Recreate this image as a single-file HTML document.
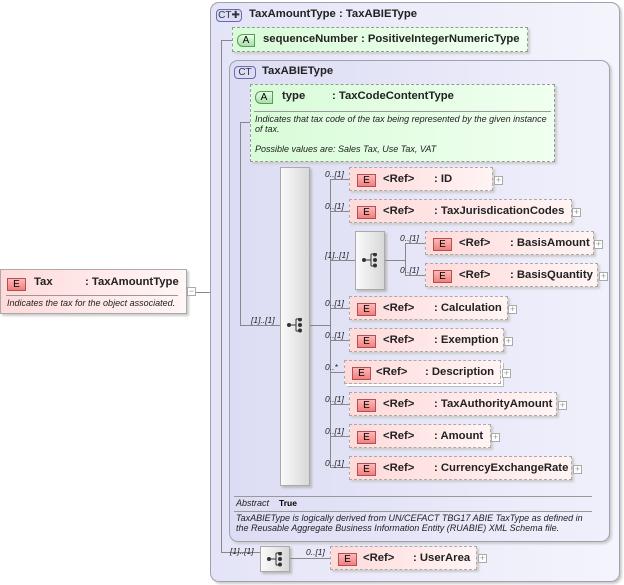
<!DOCTYPE html><html><head><style>
body{margin:0;width:624px;height:585px;position:relative;background:#fff;font-family:"Liberation Sans",sans-serif;overflow:hidden}
div{position:absolute;box-sizing:border-box}
.ct{border:1px solid #a0a0b0;border-radius:9px;background:linear-gradient(90deg,#e4e4f8,#f4f4fc);box-shadow:2px 2px 2px #ccc}
.b{font-size:11.3px;font-weight:bold;color:#222;white-space:nowrap}
.badge{border:1px solid #6a6ab0;border-radius:4px;background:#dcdcf4;font-size:10px;text-align:center;line-height:11px;color:#334}
.attr{border:1px dashed #999;background:linear-gradient(90deg,#d8fcd8,#f0fff0);box-shadow:2px 2px 2px #ccc}
.ab{border:1px solid #5a9a5a;border-radius:6px 0 0 6px;background:linear-gradient(#e8ffe8,#a8e0a8);font-size:10px;text-align:center;line-height:11px;width:18px;height:13px}
.el{border:1px dashed #aaa;background:linear-gradient(90deg,#ffdada,#fff4f4);box-shadow:2px 2px 2px #ccc;height:24px}
.eb{left:7px;top:6px;width:19px;height:13px;border:1px solid #b05050;background:linear-gradient(#ffb8b8,#f08080);font-size:10px;text-align:center;line-height:11px}
.pl{width:9px;height:9px;border:1px solid #aaa;background:#fff;font-size:9px;line-height:7px;text-align:center;color:#999}
.h{height:1px;background:#888}.v{width:1px;background:#888}
.m{font-size:8.5px;font-style:italic;color:#222;white-space:nowrap}
.seq{border:1px solid #aaa;background:linear-gradient(90deg,#fafafa,#d8d8d8);box-shadow:2px 2px 2px #bbb}
.it{font-size:9px;font-style:italic;color:#222;white-space:nowrap;line-height:10px}
svg{position:absolute}
</style></head><body>
<svg width="0" height="0"><defs><g id="sq"><circle cx="2" cy="7" r="2" fill="#333"/><line x1="2" y1="7" x2="9" y2="7" stroke="#333"/><line x1="9" y1="1" x2="9" y2="13" stroke="#333"/><line x1="9" y1="1" x2="12" y2="1" stroke="#333"/><line x1="9" y1="13" x2="12" y2="13" stroke="#333"/><circle cx="13" cy="1.5" r="2" fill="#333"/><circle cx="13" cy="7" r="2" fill="#333"/><circle cx="13" cy="12.5" r="2" fill="#333"/></g></defs></svg>
<!-- left Tax -->
<div style="left:0;top:269px;width:187px;height:45px;border:1px solid #aaa;background:linear-gradient(90deg,#ffdada,#fff6f6);box-shadow:2px 2px 2px #ccc">
<div class="eb" style="left:6px;top:8px">E</div>
<div class="b" style="left:33px;top:6px">Tax</div><div class="b" style="left:84px;top:6px">: TaxAmountType</div>
<div class="h" style="left:5px;top:25px;width:172px;background:#999"></div>
<div class="it" style="left:6px;top:28px">Indicates the tax for the object associated.</div></div>
<div class="pl" style="left:187px;top:287px;line-height:7px">−</div>
<div class="h" style="left:196px;top:292px;width:26px"></div>
<!-- outer CT -->
<div class="ct" style="left:210px;top:2px;width:410px;height:580px"></div>
<div class="badge" style="left:216px;top:9px;width:26px;height:13px">CT✚</div>
<div class="b" style="left:249px;top:8px">TaxAmountType : TaxABIEType</div>
<div class="v" style="left:221px;top:40px;height:512px"></div>
<div class="h" style="left:221px;top:40px;width:12px"></div>
<div class="attr" style="left:232px;top:27px;width:296px;height:25px"></div>
<div class="ab" style="left:237px;top:34px">A</div>
<div class="b" style="left:263px;top:33px">sequenceNumber : PositiveIntegerNumericType</div>
<!-- inner CT -->
<div class="ct" style="left:229px;top:60px;width:381px;height:482px;background:linear-gradient(90deg,#dcdcf4,#f0f0fc)"></div>
<div class="badge" style="left:234px;top:66px;width:22px;height:13px">CT</div>
<div class="b" style="left:262px;top:65px">TaxABIEType</div>
<div class="v" style="left:240px;top:122px;height:203px"></div>
<div class="h" style="left:240px;top:122px;width:11px"></div>
<div class="attr" style="left:250px;top:84px;width:305px;height:78px"></div>
<div class="ab" style="left:255px;top:91px">A</div>
<div class="b" style="left:282px;top:90px">type</div><div class="b" style="left:332px;top:90px">: TaxCodeContentType</div>
<div class="h" style="left:254px;top:111px;width:297px;background:#999"></div>
<div class="it" style="left:255px;top:114px">Indicates that tax code of the tax being represented by the given instance<br>of tax.<br><br>Possible values are: Sales Tax, Use Tax, VAT</div>
<div class="h" style="left:240px;top:325px;width:40px"></div>
<div class="m" style="left:251px;top:315px">[1]..[1]</div>
<div class="seq" style="left:280px;top:167px;width:30px;height:319px"></div>
<svg style="left:287px;top:318px" width="16" height="15"><use href="#sq"/></svg>
<div class="v" style="left:330px;top:179px;height:288px"></div>
<div class="h" style="left:310px;top:325px;width:20px"></div>
<!-- elements -->
<div class="h" style="left:330px;top:179px;width:19px"></div><div class="m" style="left:325px;top:169px">0..[1]</div>
<div class="el" style="left:349px;top:167px;width:144px"><div class="eb">E</div><div class="b" style="left:33px;top:5px">&lt;Ref&gt;</div><div class="b" style="left:84px;top:5px">: ID</div></div><div class="pl" style="left:494px;top:176px">+</div>
<div class="h" style="left:330px;top:211px;width:19px"></div><div class="m" style="left:325px;top:201px">0..[1]</div>
<div class="el" style="left:349px;top:199px;width:223px"><div class="eb">E</div><div class="b" style="left:33px;top:5px">&lt;Ref&gt;</div><div class="b" style="left:84px;top:5px">: TaxJurisdicationCodes</div></div><div class="pl" style="left:572px;top:208px">+</div>
<div class="h" style="left:330px;top:260px;width:25px"></div><div class="m" style="left:325px;top:250px">[1]..[1]</div>
<div class="seq" style="left:355px;top:231px;width:30px;height:59px"></div>
<svg style="left:362px;top:253px" width="16" height="15"><use href="#sq"/></svg>
<div class="v" style="left:405px;top:243px;height:33px"></div><div class="h" style="left:385px;top:260px;width:20px"></div>
<div class="h" style="left:405px;top:243px;width:20px"></div><div class="m" style="left:400px;top:233px">0..[1]</div>
<div class="el" style="left:425px;top:231px;width:169px"><div class="eb">E</div><div class="b" style="left:33px;top:5px">&lt;Ref&gt;</div><div class="b" style="left:84px;top:5px">: BasisAmount</div></div><div class="pl" style="left:594px;top:240px">+</div>
<div class="h" style="left:405px;top:275px;width:20px"></div><div class="m" style="left:400px;top:265px">0..[1]</div>
<div class="el" style="left:425px;top:263px;width:173px"><div class="eb">E</div><div class="b" style="left:33px;top:5px">&lt;Ref&gt;</div><div class="b" style="left:84px;top:5px">: BasisQuantity</div></div><div class="pl" style="left:599px;top:272px">+</div>
<div class="h" style="left:330px;top:308px;width:19px"></div><div class="m" style="left:325px;top:298px">0..[1]</div>
<div class="el" style="left:349px;top:296px;width:159px"><div class="eb">E</div><div class="b" style="left:33px;top:5px">&lt;Ref&gt;</div><div class="b" style="left:84px;top:5px">: Calculation</div></div><div class="pl" style="left:508px;top:305px">+</div>
<div class="h" style="left:330px;top:340px;width:19px"></div><div class="m" style="left:325px;top:330px">0..[1]</div>
<div class="el" style="left:349px;top:328px;width:155px"><div class="eb">E</div><div class="b" style="left:33px;top:5px">&lt;Ref&gt;</div><div class="b" style="left:84px;top:5px">: Exemption</div></div><div class="pl" style="left:504px;top:337px">+</div>
<div class="h" style="left:330px;top:372px;width:14px"></div><div class="m" style="left:325px;top:362px">0..*</div>
<div class="el" style="left:344px;top:360px;width:157px;border-style:dashed;box-shadow:2px 2px 0 #fff,3px 3px 0 #bbb"><div class="eb">E</div><div class="b" style="left:31px;top:5px">&lt;Ref&gt;</div><div class="b" style="left:80px;top:5px">: Description</div></div><div class="pl" style="left:502px;top:369px">+</div>
<div class="h" style="left:330px;top:404px;width:19px"></div><div class="m" style="left:325px;top:394px">0..[1]</div>
<div class="el" style="left:349px;top:392px;width:208px"><div class="eb">E</div><div class="b" style="left:33px;top:5px">&lt;Ref&gt;</div><div class="b" style="left:84px;top:5px">: TaxAuthorityAmount</div></div><div class="pl" style="left:558px;top:401px">+</div>
<div class="h" style="left:330px;top:436px;width:19px"></div><div class="m" style="left:325px;top:426px">0..[1]</div>
<div class="el" style="left:349px;top:424px;width:142px"><div class="eb">E</div><div class="b" style="left:33px;top:5px">&lt;Ref&gt;</div><div class="b" style="left:84px;top:5px">: Amount</div></div><div class="pl" style="left:491px;top:433px">+</div>
<div class="h" style="left:330px;top:467px;width:19px"></div><div class="m" style="left:325px;top:458px">0..[1]</div>
<div class="el" style="left:349px;top:456px;width:223px"><div class="eb">E</div><div class="b" style="left:33px;top:5px">&lt;Ref&gt;</div><div class="b" style="left:84px;top:5px">: CurrencyExchangeRate</div></div><div class="pl" style="left:573px;top:465px">+</div>
<!-- abstract -->
<div class="h" style="left:234px;top:496px;width:358px;background:#999"></div>
<div class="it" style="left:236px;top:498px">Abstract</div><div style="left:279px;top:498px;font-size:8.5px;font-weight:bold">True</div>
<div class="h" style="left:234px;top:511px;width:358px;background:#999"></div>
<div class="it" style="left:236px;top:513px">TaxABIEType is logically derived from UN/CEFACT TBG17 ABIE TaxType as defined in<br>the Reusable Aggregate Business Information Entity (RUABIE) XML Schema file.</div>
<!-- bottom -->
<div class="h" style="left:221px;top:552px;width:39px"></div><div class="m" style="left:230px;top:546px">[1]..[1]</div>
<div class="seq" style="left:260px;top:546px;width:30px;height:26px"></div>
<svg style="left:267px;top:552px" width="16" height="15"><use href="#sq"/></svg>
<div class="h" style="left:290px;top:558px;width:40px"></div><div class="m" style="left:306px;top:547px">0..[1]</div>
<div class="el" style="left:330px;top:546px;width:147px"><div class="eb">E</div><div class="b" style="left:32px;top:5px">&lt;Ref&gt;</div><div class="b" style="left:82px;top:5px">: UserArea</div></div><div class="pl" style="left:478px;top:554px">+</div>
</body></html>
